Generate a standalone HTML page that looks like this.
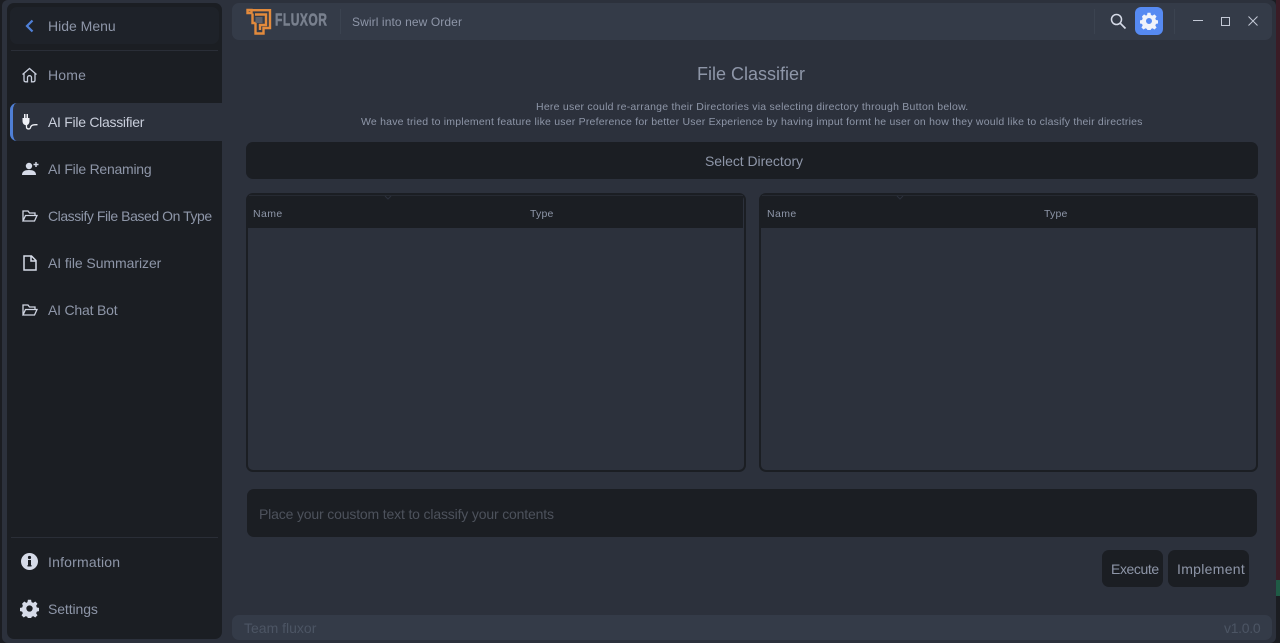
<!DOCTYPE html>
<html><head><meta charset="utf-8"><style>
html,body{margin:0;padding:0;width:1280px;height:643px;overflow:hidden;background:#1b1d22}
*{box-sizing:border-box}
body{font-family:"Liberation Sans",sans-serif;position:relative}
div,span,svg{position:absolute}
.t{white-space:nowrap;line-height:1;transform-origin:left center}
.nav{color:#8e96a8;font-size:14px;left:48px}
.ic{fill:#d6dbe8}
.h{font-size:10.500px;color:#8e96a8}
</style></head><body>
<div style="left:2px;top:0;width:1274px;height:643px;background:#2c313c;border-radius:6px"></div>
<div style="left:1276px;top:0;width:4px;height:580px;background:#3a1c26"></div>
<div style="left:1276px;top:580px;width:4px;height:16px;background:#1f5a45"></div>
<div style="left:7px;top:3px;width:215px;height:636px;background:#1b1e23;border-radius:7px"></div>
<div style="left:10px;top:7px;width:209px;height:37px;background:#1e2229;border-radius:7px"></div>
<div style="left:11px;top:50px;width:207px;height:1px;background:#2a2e37"></div>
<div style="left:11px;top:537px;width:207px;height:1px;background:#2a2e37"></div>
<div style="left:10px;top:103px;width:213px;height:38px;background:#2c313c;border-radius:7px 0 0 7px;border-left:3px solid #4f7fd6"></div>

<svg style="left:22px;top:18px" width="16" height="16" viewBox="0 0 16 16"><path d="M10.5 2.5 5 8l5.5 5.5" fill="none" stroke="#4f80d8" stroke-width="2.2"/></svg>
<div class="t nav" style="top:19px">Hide Menu</div>

<svg style="left:21px;top:67px" width="17" height="16" viewBox="0 0 17 16"><path d="M1.500 7.500 8.500 1.500l7 6M3 6.500V13c0 1 .6 1.800 1.600 1.800H6.500V10.500c0-1 .8-1.800 2-1.800s2 .8 2 1.800v4.300h1.900c1 0 1.600-.8 1.600-1.800V6.500" fill="none" stroke="#c8cedc" stroke-width="1.300"/></svg>
<div class="t nav" style="top:68px;letter-spacing:.2px">Home</div>

<svg style="left:21px;top:113px" width="18" height="18" viewBox="0 0 18 18"><path d="M3 1v4H1.500v3c0 2.500 1.500 4 3.500 4.200S8.500 10.500 8.500 8V5H7V1H5.500v4h-1V1z" fill="#eef0f6"/><path d="M5.500 12v2c0 2.500 3.500 2.500 4 .5.500-2.300 2.500-3 7-2.800" fill="none" stroke="#eef0f6" stroke-width="1.300"/></svg>
<div class="t nav" style="top:115px;color:#c9cedb;letter-spacing:-.28px">AI File Classifier</div>

<svg style="left:21px;top:161px" width="18" height="16" viewBox="0 0 18 16"><circle cx="8" cy="5" r="3.200" fill="#d6dbe8"/><path d="M1 14c0-3.500 2.500-5 7-5s7 1.500 7 5z" fill="#d6dbe8"/><path d="M12.500 3.500h5M15 1v5" stroke="#d6dbe8" stroke-width="1.400"/></svg>
<div class="t nav" style="top:162px;letter-spacing:-.25px">AI File Renaming</div>

<svg style="left:22px;top:209px" width="16" height="14" viewBox="0 0 16 14"><path d="M1 12V2h5l1.500 2H13v2.500M1 12h11.500l2.500-5.500H3.500z" fill="none" stroke="#d0d5e2" stroke-width="1.300"/></svg>
<div class="t nav" style="top:209px;letter-spacing:-.44px">Classify File Based On Type</div>

<svg style="left:23px;top:255px" width="14" height="16" viewBox="0 0 14 16"><path d="M1 1h7.500L13 5.500V15H1zM8 1v5h5" fill="none" stroke="#d6dbe8" stroke-width="1.500"/></svg>
<div class="t nav" style="top:256px;letter-spacing:-.06px">AI file Summarizer</div>

<svg style="left:22px;top:303px" width="16" height="14" viewBox="0 0 16 14"><path d="M1 12V2h5l1.500 2H13v2.500M1 12h11.500l2.500-5.500H3.500z" fill="none" stroke="#d0d5e2" stroke-width="1.300"/></svg>
<div class="t nav" style="top:303px;letter-spacing:-.2px">AI Chat Bot</div>

<svg style="left:21px;top:553px" width="17" height="17" viewBox="0 0 17 17"><circle cx="8.500" cy="8.500" r="8.500" fill="#d6dbe8"/><rect x="7" y="7" width="3" height="6.500" fill="#1b1e23"/><rect x="6.500" y="12" width="4" height="1.500" fill="#1b1e23"/><circle cx="8.500" cy="4.500" r="1.600" fill="#1b1e23"/></svg>
<div class="t nav" style="top:555px;letter-spacing:.2px">Information</div>

<svg style="left:20px;top:599px" width="19" height="19" viewBox="0 0 24 24"><path class="ic" d="M10 1h4l.6 3 2.100.9 2.600-1.700 2.800 2.800-1.700 2.600.9 2.100 3 .6v4l-3 .6-.9 2.100 1.700 2.600-2.800 2.800-2.600-1.700-2.100.9-.6 3h-4l-.6-3-2.100-.9-2.600 1.700-2.800-2.800 1.700-2.600-.9-2.100-3-.6v-4l3-.6.9-2.100L2.600 6l2.800-2.800L8 4.900l1.400-.9zM12 8a4 4 0 100 8 4 4 0 000-8z" fill-rule="evenodd"/></svg>
<div class="t nav" style="top:602px;letter-spacing:-.1px">Settings</div>

<!-- header -->
<div style="left:232px;top:3px;width:1040px;height:37px;background:#343b48;border-radius:7px"></div>
<svg style="left:246px;top:8px" width="26" height="27" viewBox="0 0 26 27"><path d="M1.500 2h4v3h-4zM5.500 2.200h18.500V20h-6.500v5.500H9.500V15H6.500V5.500M9 6.500h11v10.500h-6v5" fill="none" stroke="#e28a3c" stroke-width="2.400"/><rect x="9.500" y="9" width="7" height="6" fill="#5a5f6b"/></svg>
<div class="t" style="left:275px;top:13px;font-size:16px;font-weight:bold;color:#79808e;letter-spacing:.7px;transform:scale(.75,1.08);-webkit-text-stroke:.5px #79808e">FLUXOR</div>
<div style="left:340px;top:9px;width:1px;height:25px;background:#3b4350"></div>
<div class="t" style="left:352px;top:16px;font-size:12px;color:#8e96a8;letter-spacing:.1px">Swirl into new Order</div>
<div style="left:1094px;top:9px;width:1px;height:25px;background:#3b4350"></div>
<svg style="left:1110px;top:13px" width="17" height="17" viewBox="0 0 17 17"><circle cx="6.500" cy="6.500" r="5" fill="none" stroke="#d6dbe8" stroke-width="1.500"/><path d="M10.200 10.200 15.500 15.500" stroke="#d6dbe8" stroke-width="1.700"/></svg>
<div style="left:1135px;top:7px;width:28px;height:28px;background:#568af2;border-radius:6px"></div>
<svg style="left:1140px;top:12px" width="18" height="18" viewBox="0 0 24 24"><path fill="#f0f3fa" fill-rule="evenodd" d="M10 1h4l.6 3 2.100.9 2.600-1.700 2.800 2.800-1.700 2.600.9 2.100 3 .6v4l-3 .6-.9 2.100 1.700 2.600-2.800 2.800-2.600-1.700-2.100.9-.6 3h-4l-.6-3-2.100-.9-2.600 1.700-2.800-2.800 1.700-2.600-.9-2.100-3-.6v-4l3-.6.9-2.100L2.600 6l2.800-2.800L8 4.900l1.400-.9zM12 8a4 4 0 100 8 4 4 0 000-8z"/></svg>
<div style="left:1174px;top:9px;width:1px;height:25px;background:#3b4350"></div>
<div style="left:1193px;top:20px;width:10px;height:1px;background:#c3c9d6"></div>
<div style="left:1221px;top:17px;width:9px;height:9px;border:1px solid #c3c9d6"></div>
<svg style="left:1248px;top:16px" width="10" height="10" viewBox="0 0 10 10"><path d="M.5.500 9.500 9.500M9.500.500.500 9.500" stroke="#c3c9d6" stroke-width="1"/></svg>

<!-- title -->
<div class="t" style="left:697px;top:65px;font-size:18px;color:#8e96a8">File Classifier</div>
<div class="t" style="left:536px;top:102px;font-size:10.500px;color:#8e96a8;letter-spacing:.24px">Here user could re-arrange their Directories via selecting directory through Button below.</div>
<div class="t" style="left:361px;top:117px;font-size:10.500px;color:#8e96a8;letter-spacing:.21px">We have tried to implement feature like user Preference for better User Experience by having imput formt he user on how they would like to clasify their directries</div>

<div style="left:246px;top:142px;width:1012px;height:37px;background:#1b1e23;border-radius:7px"></div>
<div class="t" style="left:705px;top:154px;font-size:14px;color:#8e96a8;letter-spacing:-.05px">Select Directory</div>

<!-- tables -->
<div style="left:246px;top:193px;width:500px;height:279px;border:2.500px solid #1b1e23;border-top-width:2px;border-radius:7px"></div>
<div style="left:248px;top:196px;width:495px;height:32px;background:#1b1e23"></div>
<div style="left:249px;top:195px;width:494px;height:1px;background:#262a32"></div>
<svg style="left:384px;top:195px" width="8" height="5" viewBox="0 0 8 5"><path d="M1 1l3 3 3-3" fill="none" stroke="#2c313c" stroke-width="1"/></svg>
<div class="t h" style="left:253px;top:209px;letter-spacing:.4px">Name</div>
<div class="t h" style="left:530px;top:209px;letter-spacing:.2px">Type</div>

<div style="left:759px;top:193px;width:499px;height:279px;border:2.500px solid #1b1e23;border-top-width:2px;border-radius:7px"></div>
<div style="left:761px;top:196px;width:495px;height:32px;background:#1b1e23"></div>
<div style="left:762px;top:195px;width:494px;height:1px;background:#262a32"></div>
<svg style="left:896px;top:195px" width="8" height="5" viewBox="0 0 8 5"><path d="M1 1l3 3 3-3" fill="none" stroke="#2c313c" stroke-width="1"/></svg>
<div class="t h" style="left:767px;top:209px;letter-spacing:.4px">Name</div>
<div class="t h" style="left:1044px;top:209px;letter-spacing:.2px">Type</div>

<!-- input -->
<div style="left:247px;top:489px;width:1010px;height:48px;background:#1b1e23;border-radius:7px"></div>
<div class="t" style="left:259px;top:507px;font-size:14px;color:#4d525c;letter-spacing:-.16px">Place your coustom text to classify your contents</div>

<!-- buttons -->
<div style="left:1102px;top:550px;width:61px;height:37px;background:#1b1e23;border-radius:7px"></div>
<div class="t" style="left:1111px;top:562px;font-size:14px;color:#8e96a8;letter-spacing:-.4px">Execute</div>
<div style="left:1168px;top:550px;width:81px;height:37px;background:#1b1e23;border-radius:7px"></div>
<div class="t" style="left:1177px;top:562px;font-size:14px;color:#8e96a8;letter-spacing:.3px">Implement</div>

<!-- footer -->
<div style="left:232px;top:615px;width:1040px;height:25px;background:#343b48;border-radius:7px"></div>
<div class="t" style="left:244px;top:621px;font-size:14px;color:#4c5564">Team fluxor</div>
<div class="t" style="left:1224px;top:621px;font-size:14px;color:#4c5564;letter-spacing:-.3px">v1.0.0</div>
</body></html>
